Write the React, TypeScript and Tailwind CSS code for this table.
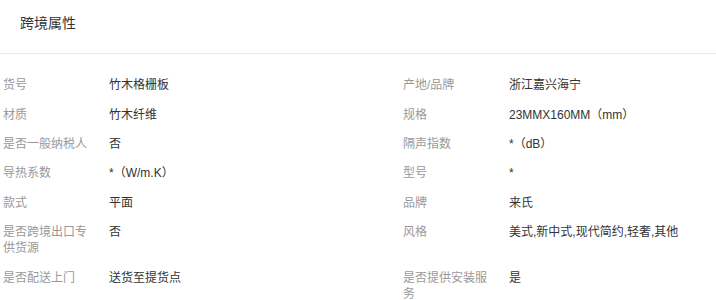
const rows: [string, string, string, string][] = [
  ['货号', '竹木格栅板', '产地/品牌', '浙江嘉兴海宁'],
  ['材质', '竹木纤维', '规格', '23MMX160MM（mm）'],
  ['是否一般纳税人', '否', '隔声指数', '*（dB）'],
  ['导热系数', '*（W/m.K）', '型号', '*'],
  ['款式', '平面', '品牌', '来氏'],
  ['是否跨境出口专供货源', '否', '风格', '美式,新中式,现代简约,轻奢,其他'],
  ['是否配送上门', '送货至提货点', '是否提供安装服务', '是'],
];

function Cell({ label, value }: { label: string; value: string }) {
  return (
    <div className="flex py-[6.4px] leading-[16.5px]">
      <div className="w-[90px] shrink-0 text-[#999999] break-all">{label}</div>
      <div className="ml-[16px] text-[#333333]">{value}</div>
    </div>
  );
}

export default function App() {
  return (
    <div
      className="w-[716px] h-[300px] overflow-hidden bg-white text-[12px]"
      style={{ fontFamily: '"Liberation Sans", "Noto Sans CJK SC", sans-serif' }}
    >
      <div className="h-[54px] border-b border-[#e8e8e8] pt-[13px] pl-[20px]">
        <h3 className="text-[14px] leading-[20px] text-[#333333] font-normal">跨境属性</h3>
      </div>
      <div className="pt-[17px] pl-[3px]">
        <div className="grid grid-cols-[400px_400px]">
          {rows.map(([l1, v1, l2, v2]) => (
            <div key={l1} className="contents">
              <Cell label={l1} value={v1} />
              <Cell label={l2} value={v2} />
            </div>
          ))}
        </div>
      </div>
    </div>
  );
}
